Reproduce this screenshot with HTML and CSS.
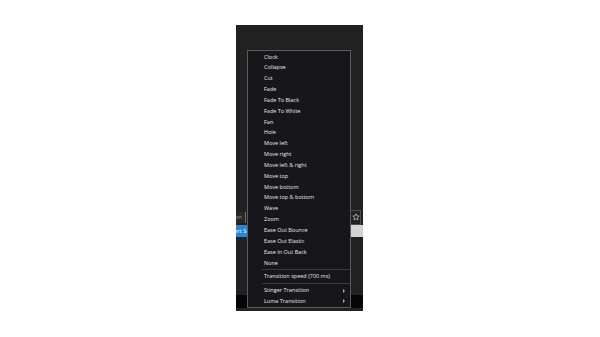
FILE: index.html
```html
<!DOCTYPE html>
<html lang="en">
<head>
    <meta charset="UTF-8">
    <meta name="viewport" content="width=device-width, initial-scale=1.0">
    <title>Scene transitions menu</title>
    <link rel="stylesheet" href="styles.css">
</head>
<body>
    <div class="dock">
        <div class="dock-top"></div>
        <div class="toolbar">
            <div class="search"><span>Transition</span></div>
            <div class="star-btn">
                <svg width="8" height="8" viewBox="0 0 16 16">
                    <path d="M8 1.5l1.9 4.3 4.6.4-3.5 3 1.1 4.6L8 11.4l-4.1 2.4 1.1-4.6-3.5-3 4.6-.4z" fill="none" stroke="#cfcfcf" stroke-width="1.4" stroke-linejoin="round"/>
                </svg>
            </div>
        </div>
        <div class="list-row">
            <div class="selected"><span>Insert Scene</span></div>
            <div class="rest"></div>
        </div>
        <div class="filler"></div>
        <div class="statusbar"></div>
    </div>

    <div class="menu">
        <div class="item">Clock</div>
        <div class="item">Collapse</div>
        <div class="item">Cut</div>
        <div class="item">Fade</div>
        <div class="item">Fade To Black</div>
        <div class="item">Fade To White</div>
        <div class="item">Fan</div>
        <div class="item">Hole</div>
        <div class="item">Move left</div>
        <div class="item">Move right</div>
        <div class="item">Move left &amp; right</div>
        <div class="item">Move top</div>
        <div class="item">Move bottom</div>
        <div class="item">Move top &amp; bottom</div>
        <div class="item">Wave</div>
        <div class="item">Zoom</div>
        <div class="item">Ease Out Bounce</div>
        <div class="item">Ease Out Elastic</div>
        <div class="item">Ease In Out Back</div>
        <div class="item">None</div>
        <div class="sep"></div>
        <div class="item">Transition speed (700 ms)</div>
        <div class="sep"></div>
        <div class="item sub">Stinger Transition <span class="arrow"></span></div>
        <div class="item sub">Luma Transition <span class="arrow"></span></div>
    </div>
</body>
</html>
```

FILE: styles.css
```css
body {
    margin: 0;
    background: #fff;
    font-family: "Open Sans", "Liberation Sans", Arial, sans-serif;
}
.dock {
    width: 127px;
    height: 286px;
    margin: 25px 0 0 236px;
    background: #212121;
    display: flex;
    flex-direction: column;
}
.dock-top {
    height: 184px;
}
.toolbar {
    height: 16px;
    display: flex;
    justify-content: space-between;
    align-items: center;
}
.search {
    width: 10px;
    height: 11px;
    background: #282828;
    border-right: 1px solid #6c6c6c;
    overflow: hidden;
    display: flex;
    justify-content: flex-end;
    align-items: center;
    padding-right: 3px;
    box-sizing: border-box;
    font-size: 5.5px;
    font-weight: 500;
    color: #9a9a9a;
    white-space: nowrap;
}
.star-btn {
    width: 11px;
    height: 15px;
    border: 1px solid #4e4e4e;
    margin-right: 2px;
    box-sizing: border-box;
    display: flex;
    align-items: center;
    justify-content: center;
}
.list-row {
    height: 12px;
    display: flex;
}
.selected {
    width: 60px;
    background: #2c84da;
    color: #fff;
    font-size: 5.5px;
    font-weight: 500;
    line-height: 12px;
    white-space: nowrap;
    overflow: hidden;
}
.selected span {
    margin-left: -9px;
}
.rest {
    flex: 1;
    background: #d3d3d3;
}
.filler {
    flex: 1;
}
.statusbar {
    height: 13px;
    background: #050505;
    margin-bottom: 3px;
}
.menu {
    position: absolute;
    left: 247px;
    top: 50px;
    width: 102px;
    padding-top: 0.5px;
    background: #17171b;
    border: 1px solid #5c5c5c;
    color: #e8e8e8;
    font-size: 5.5px;
    font-weight: 500;
}
.item {
    height: 10.85px;
    line-height: 10.85px;
    padding-left: 16px;
    white-space: nowrap;
}
.item.sub {
    display: flex;
    justify-content: space-between;
    align-items: center;
    padding-right: 5px;
}
.arrow {
    width: 0;
    height: 0;
    border-top: 2px solid transparent;
    border-bottom: 2px solid transparent;
    border-left: 2px solid #b0b0b0;
}
.sep {
    height: 1px;
    margin: 1px 0 1px 14px;
    background: #3a3a3e;
}
```
